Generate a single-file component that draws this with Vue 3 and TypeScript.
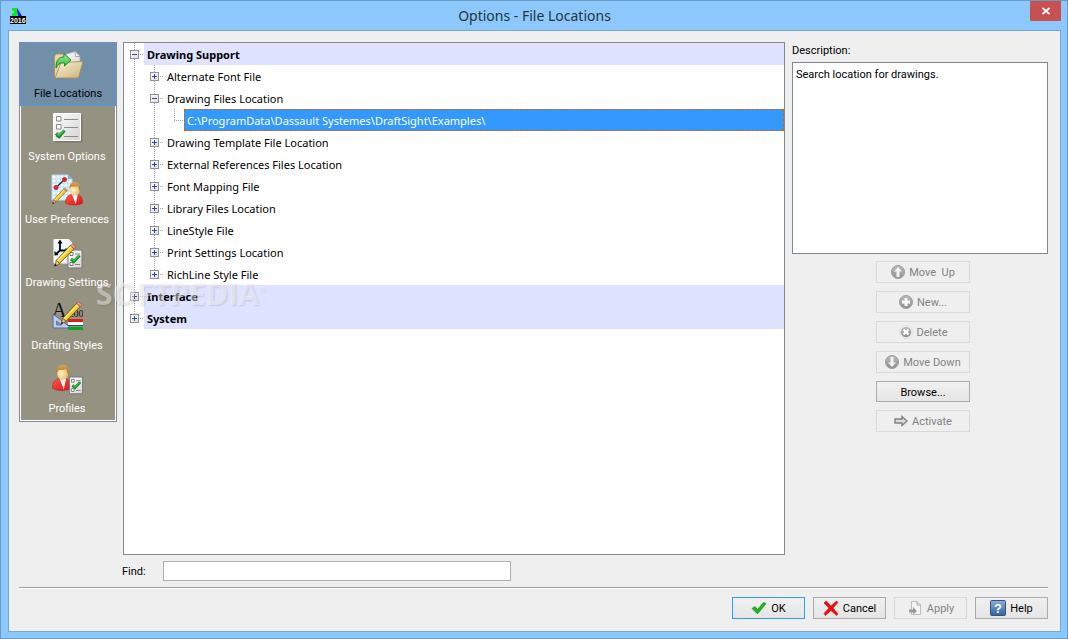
<script setup lang="ts">
import { computed, ref } from 'vue'

interface Category {
  id: string
  label: string
}

interface TreeNode {
  id: string
  label: string
  children?: TreeNode[]
  expandable?: boolean
}

interface Row {
  node: TreeNode
  level: number
  open: boolean
  expandable: boolean
  guides: string[]
}

const categories: Category[] = [
  { id: 'files', label: 'File Locations' },
  { id: 'system', label: 'System Options' },
  { id: 'user', label: 'User Preferences' },
  { id: 'drawing', label: 'Drawing Settings' },
  { id: 'drafting', label: 'Drafting Styles' },
  { id: 'profiles', label: 'Profiles' },
]

const tree: TreeNode[] = [
  {
    id: 'support',
    label: 'Drawing Support',
    children: [
      { id: 'alt-font', label: 'Alternate Font File', expandable: true },
      {
        id: 'drawings',
        label: 'Drawing Files Location',
        children: [
          { id: 'examples', label: 'C:\\ProgramData\\Dassault Systemes\\DraftSight\\Examples\\' },
        ],
      },
      { id: 'templates', label: 'Drawing Template File Location', expandable: true },
      { id: 'xrefs', label: 'External References Files Location', expandable: true },
      { id: 'font-map', label: 'Font Mapping File', expandable: true },
      { id: 'library', label: 'Library Files Location', expandable: true },
      { id: 'linestyle', label: 'LineStyle File', expandable: true },
      { id: 'print', label: 'Print Settings Location', expandable: true },
      { id: 'richline', label: 'RichLine Style File', expandable: true },
    ],
  },
  { id: 'interface', label: 'Interface', expandable: true },
  { id: 'sys', label: 'System', expandable: true },
]

const activeCategory = ref('files')
const selected = ref('examples')
const expanded = ref(new Set(['support', 'drawings']))
const find = ref('')
const description = ref('Search location for drawings.')

function flatten(nodes: TreeNode[], level: number, trail: string[]): Row[] {
  return nodes.flatMap((node, i) => {
    const last = i === nodes.length - 1
    const expandable = Boolean(node.children || node.expandable)
    const open = expanded.value.has(node.id)
    const row: Row = { node, level, open, expandable, guides: [...trail, last ? 'half' : 'full'] }
    const below = open && node.children
      ? flatten(node.children, level + 1, [...trail, last ? 'none' : 'full'])
      : []
    return [row, ...below]
  })
}

const rows = computed(() => flatten(tree, 0, []))

function toggle(id: string) {
  const next = new Set(expanded.value)
  if (!next.delete(id)) next.add(id)
  expanded.value = next
}
</script>

<template>
  <div class="window">
    <svg class="defs" width="0" height="0" aria-hidden="true">
      <defs>
        <linearGradient id="folder" x1="0" y1="0" x2="1" y2="1">
          <stop offset="0" stop-color="#fbf3d6" /><stop offset="1" stop-color="#cdb27a" />
        </linearGradient>
        <linearGradient id="paper" x1="0" y1="0" x2="1" y2="1">
          <stop offset="0" stop-color="#ffffff" /><stop offset="1" stop-color="#d4d4d4" />
        </linearGradient>
        <linearGradient id="green" x1="0" y1="0" x2="0" y2="1">
          <stop offset="0" stop-color="#a4f29c" /><stop offset="1" stop-color="#22b43c" />
        </linearGradient>
        <linearGradient id="coat" x1="0" y1="0" x2="1" y2="1">
          <stop offset="0" stop-color="#ff5a50" /><stop offset="1" stop-color="#e01010" />
        </linearGradient>
        <radialGradient id="skin" cx="0.35" cy="0.5" r="0.8">
          <stop offset="0" stop-color="#fff3c0" /><stop offset="1" stop-color="#dcae58" />
        </radialGradient>
        <linearGradient id="hair" x1="0" y1="0" x2="0" y2="1">
          <stop offset="0" stop-color="#d8a658" /><stop offset="1" stop-color="#a86c20" />
        </linearGradient>
        <linearGradient id="grey" x1="0" y1="0" x2="0" y2="1">
          <stop offset="0" stop-color="#bcbcbc" /><stop offset="1" stop-color="#909090" />
        </linearGradient>
        <linearGradient id="helpblue" x1="0" y1="0" x2="0" y2="1">
          <stop offset="0" stop-color="#8db0d8" /><stop offset="1" stop-color="#345f9b" />
        </linearGradient>
        <g id="person">
          <path d="M0 18.500C0 12.500 2.500 10.500 6 9.500H12C15.500 10.500 17.500 13 17.500 18.500C13 21 4 21 0 18.500Z" fill="url(#coat)" stroke="#b31818" stroke-width=".5" />
          <path d="M6.500 9.500L10.500 19.500L12.500 9.500Z" fill="#fff" />
          <ellipse cx="9.500" cy="4.800" rx="5.200" ry="6.200" fill="url(#skin)" />
          <path d="M4.200 5C3-1 6-3 9.800-3C14-3 16.500 1 14.800 6.500C13.800 5 13.500 2.500 12.500 1C10 2.500 7 1.500 5.200 2Z" fill="url(#hair)" />
        </g>
        <g id="pencil">
          <path d="M0 24L2 17.500L5.500 21Z" fill="#e9c48f" stroke="#4a3410" stroke-width=".6" />
          <path d="M0 24L.8 21.300L2.600 23Z" fill="#111" />
          <path d="M2 17.500L17 1.500L21 5L5.500 21Z" fill="#f5c92a" stroke="#5b4408" stroke-width=".8" />
          <path d="M3.200 18.300L18.200 2.500" stroke="#fff08a" stroke-width="1.300" />
          <path d="M17 1.500L19 -.5L23 3L21 5Z" fill="#f09a86" stroke="#8d4438" stroke-width=".6" />
        </g>
        <g id="checklist">
          <path d="M0 0H14V18H0Z" fill="url(#paper)" stroke="#777" />
          <path d="M2 2.500H5V5.500H2ZM2 12.500H5V15.500H2Z" fill="#fff" stroke="#777" />
          <path d="M7 4H12M7 14.500H12" stroke="#888" />
          <path d="M3 9L6 11.500L11.500 5.500" fill="none" stroke="#138a24" stroke-width="3" />
          <path d="M3.500 9L6 10.800L11 5.500" fill="none" stroke="#36c84a" stroke-width="1.200" />
        </g>
      </defs>
    </svg>

    <header class="titlebar">
      <svg class="app-icon" width="17" height="18" viewBox="0 0 17 18" aria-hidden="true">
        <path d="M2 1H7V9H2V6H4V4H2Z" fill="#00f018" />
        <path d="M7 9V1L12 9H9Z" fill="#0b1fd0" />
        <path d="M7 4V9H8Z" fill="#9bd4ff" />
        <path d="M0 9H16V17H0Z" fill="#000" />
        <text x="0" y="15.800" class="badge" font-size="7">2016</text>
      </svg>
      <h1>Options - File Locations</h1>
      <button class="close" type="button" aria-label="Close">
        <svg width="8" height="8" viewBox="0 0 8 8"><path d="M.5 1L7.500 7M7.500 1L.5 7" stroke="#fff" stroke-width="1.800" /></svg>
      </button>
    </header>

    <main class="client">
      <div class="body">
        <nav class="sidebar" aria-label="Option categories">
          <button
            v-for="c in categories"
            :key="c.id"
            type="button"
            class="category"
            :class="{ active: c.id === activeCategory }"
            @click="activeCategory = c.id"
          >
            <svg width="32" height="32" viewBox="0 0 32 32" aria-hidden="true">
              <g v-if="c.id === 'files'">
                <path d="M2.500 29V8L4 6H12L13 9H26V29Z" fill="#e8d7a6" stroke="#a58b52" stroke-width=".8" />
                <path d="M12 7L23 3.500L28 8V20H12Z" fill="url(#paper)" stroke="#a8adb2" stroke-width=".8" />
                <path d="M23 3.500L23.500 8.500H28Z" fill="#fff" stroke="#999" stroke-width=".8" />
                <path d="M3 30L9 14.500L31 13.500L26.500 30Z" fill="url(#folder)" stroke="#a98d50" stroke-width=".9" />
                <path d="M4 19C4 12 7 9 12 9V5.500L19 12L12.500 18V15C8.500 14.500 6 16 4 20Z" fill="url(#green)" stroke="#157c25" stroke-width=".9" />
              </g>
              <g v-else-if="c.id === 'system'">
                <path d="M4 4H31.500V31.500H4Z" fill="#5f5c52" opacity=".5" />
                <path d="M2.500 2.500H29.500V29.500H2.500Z" fill="url(#paper)" stroke="#fff" />
                <path d="M5.500 5.500H10V10H5.500ZM5.500 13.500H10V18H5.500ZM5.500 22H10V26H5.500Z" fill="#fff" stroke="#8a8a8a" />
                <path d="M13 8.500H27M13 16.500H27M13 25.500H27" stroke="#8c8c8c" />
                <path d="M5 22.500L8 25.500L13.500 19.500" fill="none" stroke="#14822a" stroke-width="3" />
                <path d="M5.500 22.500L8 24.800L13 19.500" fill="none" stroke="#41c84e" stroke-width="1.200" />
              </g>
              <g v-else-if="c.id === 'user'">
                <path d="M1 1H17L21 5V26H1Z" fill="#f5fbff" stroke="#b7d7e8" />
                <path d="M1 5H20M1 9H20M1 13H20M1 17H20M1 21H20M5 1V25M9 1V25M13 1V25M17 1V25" stroke="#a9d5ee" stroke-width=".8" />
                <path d="M17 1L21 5H17Z" fill="#6baee8" />
                <path d="M5 13.500L13 6" stroke="#222" stroke-width="1.300" />
                <circle cx="5" cy="13.500" r="2.500" fill="#c62c46" /><circle cx="13.500" cy="5.500" r="2.500" fill="#c62c46" />
                <use href="#pencil" transform="translate(1.500 14) scale(.66)" />
                <use href="#person" transform="translate(14.500 11) scale(.98)" />
              </g>
              <g v-else-if="c.id === 'drawing'">
                <path d="M3 2.500H18L21 6V26H3Z" fill="#edf6fd" stroke="#fff" />
                <path d="M9 5V13.500H16M9 13.500L5 17" fill="none" stroke="#000" stroke-width="1.800" />
                <path d="M9 2.500L6.500 6.500H11.500ZM18.500 13.500L14.500 11V16ZM3.500 18.500V14L7.500 18Z" fill="#000" />
                <use href="#checklist" transform="translate(17 13)" />
                <use href="#pencil" transform="translate(3.500 7) scale(.93)" />
              </g>
              <g v-else-if="c.id === 'drafting'">
                <text x="1" y="17" class="serif-letter" font-size="20">A</text>
                <text x="20" y="17" class="serif-letter" font-size="10">.00</text>
                <path d="M2 14V28H20Z" fill="#bccdf0" stroke="#586b9d" />
                <path d="M5.500 21V25H11Z" fill="#969282" stroke="#586b9d" stroke-width=".8" />
                <path d="M17 19H32V22H17Z" fill="#e01919" /><path d="M17 22H32V25H17Z" fill="#fff" /><path d="M17 25H32V26H17Z" fill="#2346a8" /><path d="M17 27H32V30H17Z" fill="#08a81c" />
                <use href="#pencil" transform="translate(10 2) scale(.92)" />
              </g>
              <g v-else>
                <use href="#person" transform="translate(1.500 5) scale(1.080 1.100)" />
                <use href="#checklist" transform="translate(18.500 14) scale(.93)" />
              </g>
            </svg>
            <span>{{ c.label }}</span>
          </button>
        </nav>

        <div class="tree" role="tree" aria-label="File locations">
          <div
            v-for="r in rows"
            :key="r.node.id"
            class="row"
            role="treeitem"
            :aria-level="r.level + 1"
            :aria-expanded="r.expandable ? r.open : undefined"
            :aria-selected="selected === r.node.id"
          >
            <span v-for="(g, i) in r.guides" :key="i" class="guide" :class="g">
              <template v-if="i === r.level">
                <span class="stub"></span>
                <button
                  v-if="r.expandable"
                  class="expander"
                  type="button"
                  :aria-label="(r.open ? 'Collapse ' : 'Expand ') + r.node.label"
                  @click="toggle(r.node.id)"
                >
                  <svg width="9" height="9" viewBox="0 0 9 9" shape-rendering="crispEdges">
                    <path d="M2 4H7V5H2Z" fill="#2b4a9c" />
                    <path v-if="!r.open" d="M4 2H5V7H4Z" fill="#2b4a9c" />
                  </svg>
                </button>
              </template>
            </span>
            <button
              type="button"
              class="node"
              :class="{ group: r.level === 0, selected: selected === r.node.id }"
              @click="selected = r.node.id"
            >{{ r.node.label }}</button>
          </div>
        </div>

        <section class="details">
          <label for="description">Description:</label>
          <textarea id="description" v-model="description" readonly></textarea>
          <div class="actions">
            <button type="button" disabled>
              <svg width="14" height="14" viewBox="0 0 14 14"><circle cx="7" cy="7" r="6.500" fill="url(#grey)" stroke="#9c9c9c" /><path d="M7 2L11 6.500H8.500V12H5.500V6.500H3Z" fill="#f3f3f3" /></svg>
              <span>Move&nbsp; Up</span>
            </button>
            <button type="button" disabled>
              <svg width="14" height="14" viewBox="0 0 14 14"><circle cx="7" cy="7" r="6.500" fill="url(#grey)" stroke="#9c9c9c" /><path d="M5.500 3H8.500V5.500H11V8.500H8.500V11H5.500V8.500H3V5.500H5.500Z" fill="#f8f8f8" /></svg>
              <span>New...</span>
            </button>
            <button type="button" disabled>
              <svg width="14" height="14" viewBox="0 0 14 14"><circle cx="7" cy="7" r="6.500" fill="#fafafa" stroke="#ddd" /><circle cx="7" cy="7" r="5.300" fill="url(#grey)" /><path d="M4.500 4.500L9.500 9.500M9.500 4.500L4.500 9.500" stroke="#fff" stroke-width="2.200" /></svg>
              <span>Delete</span>
            </button>
            <button type="button" disabled>
              <svg width="14" height="14" viewBox="0 0 14 14"><circle cx="7" cy="7" r="6.500" fill="url(#grey)" stroke="#9c9c9c" /><path d="M7 12L11 7.500H8.500V2H5.500V7.500H3Z" fill="#f3f3f3" /></svg>
              <span>Move Down</span>
            </button>
            <button type="button" class="browse"><span>Browse...</span></button>
            <button type="button" disabled>
              <svg width="14" height="14" viewBox="0 0 14 14"><path d="M1 5H8V2.500L13 7L8 11.500V9H1Z" fill="#dcdcdc" stroke="#808080" stroke-width="1.400" /></svg>
              <span>Activate</span>
            </button>
          </div>
        </section>
      </div>

      <div class="find">
        <label for="find">Find:</label>
        <input id="find" v-model="find" type="text" />
      </div>

      <footer class="footer">
        <button type="button" class="default">
          <svg width="16" height="16" viewBox="0 0 16 16"><path d="M1 8.500L4 6.500L6.500 9.500L12.500 2.500L15 3.500L7 13.500H6Z" fill="#18b418" stroke="#0e9412" stroke-width=".6" /></svg>
          <span>OK</span>
        </button>
        <button type="button">
          <svg width="16" height="16" viewBox="0 0 16 16"><path d="M1 3L3 1L8 6L13.500 1L15 2.500L10 8L15 14L13.500 15.500L8 10.500L2.500 15.500L1 13.500L6 8Z" fill="#ee0c0c" stroke="#c80000" stroke-width=".5" /></svg>
          <span>Cancel</span>
        </button>
        <button type="button" disabled>
          <svg width="16" height="16" viewBox="0 0 16 16"><path d="M4.500 1.500H10L13.500 5V14.500H4.500Z" fill="#f4f4f4" stroke="#bdbdbd" /><path d="M10 1.500V5H13.500" fill="none" stroke="#aaa" /><path d="M2 9.500H6V7L10 11L6 14.500V12.500H2Z" fill="#9a9a9a" /></svg>
          <span>Apply</span>
        </button>
        <button type="button">
          <svg width="16" height="16" viewBox="0 0 16 16"><rect x=".5" y=".5" width="15" height="15" rx="1" fill="url(#helpblue)" stroke="#34537f" /><text x="8" y="13" text-anchor="middle" class="question" font-size="13">?</text></svg>
          <span>Help</span>
        </button>
      </footer>
    </main>

    <div class="watermark" aria-hidden="true">SOFTPEDIA<sup>®</sup></div>
  </div>
</template>

<style>
body {
  margin: 0;
}
</style>

<style scoped>
* {
  box-sizing: border-box;
}

.window {
  position: relative;
  display: flex;
  flex-direction: column;
  min-height: 100vh;
  padding: 0 6px 6px 7px;
  border: 1px solid #6a9ac6;
  background: #8cc8fb;
  color: #000;
  font: 11px/14px Roboto, "Noto Sans", sans-serif;
}

button,
input,
textarea {
  font: inherit;
  color: inherit;
}

svg {
  display: block;
  flex: none;
}

.defs {
  position: absolute;
}

.titlebar {
  display: grid;
  grid-template-columns: 31px 1fr 31px;
  height: 29px;
}

.app-icon {
  margin: 6px 0 0 2px;
}

.badge {
  fill: #fff;
  font-family: "Liberation Sans", sans-serif;
  font-weight: 700;
}

h1 {
  margin: 0;
  text-align: center;
  font: 14px/29px "Noto Sans", sans-serif;
  color: #27343f;
}

.close {
  display: grid;
  place-items: center;
  width: 31px;
  height: 20px;
  padding: 0;
  border: 0;
  background: #c75050;
}

.client {
  flex: 1;
  display: flex;
  flex-direction: column;
  padding: 11px 12px 12px 10px;
  border: 1px solid #72a8dc;
  background: #efefef;
}

.body {
  flex: 1;
  display: grid;
  grid-template-columns: 98px 1fr 256px;
  column-gap: 7px;
}

.sidebar {
  align-self: start;
  border: 1px solid #848794;
  background: #969282;
  box-shadow: inset 0 0 0 1px #fff;
}

.category {
  display: flex;
  flex-direction: column;
  align-items: center;
  gap: 7px;
  width: 100%;
  height: 63px;
  padding: 4px 2px 0 0;
  border: 1px solid transparent;
  background: none;
  color: #fff;
  white-space: nowrap;
}

.category.active {
  padding-right: 0;
  border-color: #5597de;
  background: #718fa8;
  color: #000;
}

.serif-letter {
  font-family: "Liberation Serif", serif;
  fill: #111;
}

.tree {
  margin-left: -1px;
  border: 1px solid #828790;
  background: #fff;
}

.row {
  display: flex;
  height: 22px;
}

.guide {
  position: relative;
  flex: none;
  width: 20px;
  background: repeating-linear-gradient(#a0a0a0 0 1px, transparent 1px 2px) 10px 0 / 1px 100% no-repeat;
}

.guide.half {
  background-size: 1px 12px;
}

.guide.none {
  background: none;
}

.stub {
  position: absolute;
  top: 11px;
  left: 10px;
  width: 10px;
  height: 1px;
  background: repeating-linear-gradient(90deg, #a0a0a0 0 1px, transparent 1px 2px);
}

.expander {
  position: absolute;
  top: 7px;
  left: 6px;
  width: 9px;
  height: 9px;
  padding: 0;
  border: 0;
  outline: 1px solid #919191;
  outline-offset: -1px;
  background: linear-gradient(135deg, #fff, #dcdcdc);
}

.node {
  flex: 1;
  padding: 1px 2px 0;
  border: 0 solid transparent;
  border-width: 0 1px;
  background: none;
  text-align: left;
  font: 11px/21px "Noto Sans", sans-serif;
  white-space: nowrap;
}

.node.group {
  background: #dfe3ff;
  font-weight: 700;
}

.node.selected {
  padding-top: 0;
  border: 1px dashed #cc6600;
  background: #3399ff;
  color: #fff;
}

.details {
  display: flex;
  flex-direction: column;
}

.details label {
  height: 20px;
  padding-top: 2px;
}

textarea {
  height: 192px;
  padding: 5px 3px;
  border: 1px solid #828790;
  background: #fff;
  outline: 0;
  resize: none;
}

.actions {
  display: flex;
  flex-direction: column;
  align-items: center;
  gap: 8px;
  padding: 7px 0 0 6px;
}

.actions button,
.footer button {
  display: flex;
  align-items: center;
  justify-content: center;
  gap: 4px;
  height: 22px;
  padding: 0;
  border: 1px solid #acacac;
  background: linear-gradient(#f0f0f0, #e5e5e5);
  white-space: nowrap;
}

.actions span,
.footer span {
  padding-top: 2px;
}

.actions button {
  width: 94px;
}

.actions button:disabled,
.footer button:disabled {
  border-color: #d9d9d9;
  background: #efefef;
  color: #838383;
}

.actions .browse {
  height: 21px;
}

.find {
  display: flex;
  align-items: center;
  gap: 16px;
  padding: 6px 0 6px 103px;
}

.find label {
  width: 25px;
  padding-top: 2px;
}

.find input {
  width: 348px;
  height: 20px;
  padding: 0 4px;
  border: 1px solid #abadb3;
  background: #fff;
  outline: 0;
}

.footer {
  display: flex;
  justify-content: flex-end;
  gap: 8px;
  padding-top: 9px;
  border-top: 1px solid #a0a0a0;
  box-shadow: inset 0 1px #fff;
}

.footer button {
  width: 73px;
}

.footer .default {
  border-color: #3399ff;
}

.question {
  fill: #fff;
  font-family: "Liberation Sans", sans-serif;
  font-weight: 700;
}

.watermark {
  position: absolute;
  top: 275px;
  left: 95px;
  color: rgba(255, 255, 255, 0.45);
  font: 700 30px/36px "Open Sans", sans-serif;
  text-shadow: 1px 1px 2px rgba(0, 0, 0, 0.12);
  pointer-events: none;
}

.watermark sup {
  font-size: 9px;
  line-height: 9px;
  vertical-align: 12px;
}
</style>
